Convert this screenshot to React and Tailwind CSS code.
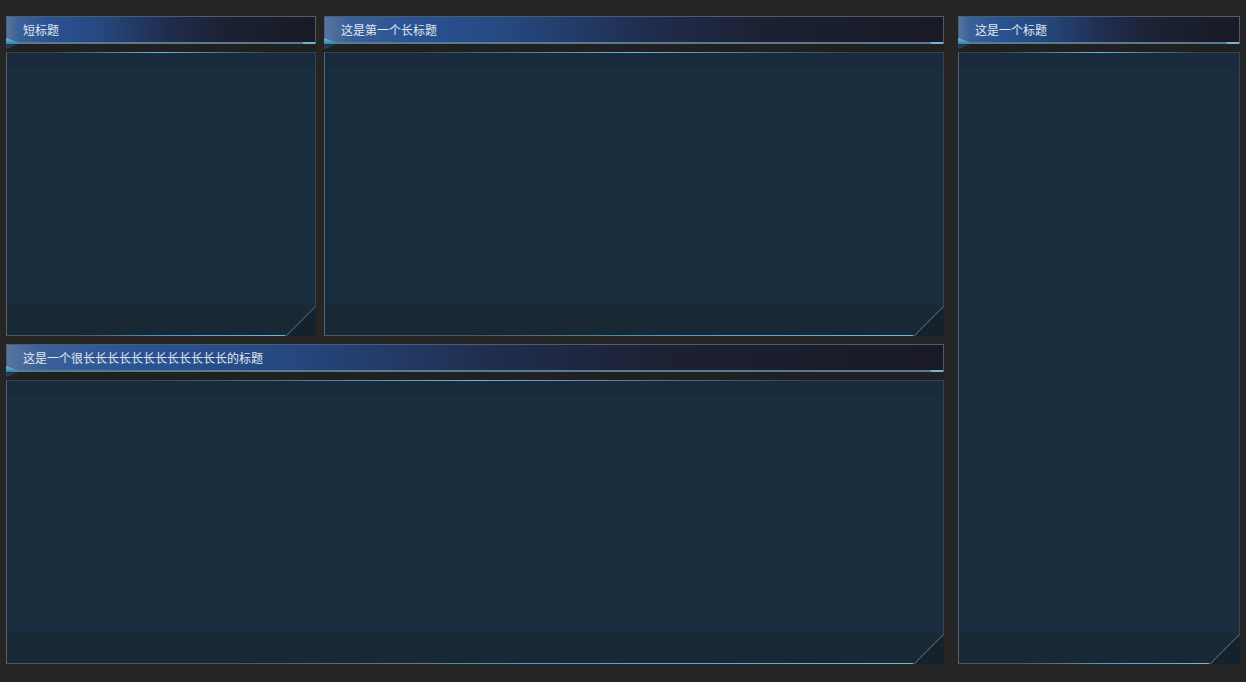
import React from 'react'

// 面板：标题条 + 内容框（右下角斜切）
function Panel({ title, className = '' }) {
  return (
    <div className={`flex flex-col bg-[#1f2022] ${className}`}>
      {/* 标题条 */}
      <div className="relative h-[28px] shrink-0 border border-[#4b5d73] border-b-2 border-b-[#5a7a90] bg-[linear-gradient(90deg,#56759e_0%,#3a6098_4%,#2a5393_14%,#25487f_30%,#202d4e_52%,#1c2031_72%,#191a25_100%)]">
        <span className="absolute left-[16px] top-1/2 -translate-y-1/2 whitespace-nowrap text-[12px] leading-none text-[#e2e9f0] font-['Noto_Sans_CJK_SC',sans-serif]">
          {title}
        </span>
        <span className="absolute right-0 bottom-[-2px] h-[2px] w-[12px] bg-[#74b4cf]" />
        <svg className="absolute left-[-1px] bottom-[-7px]" width="15" height="11" viewBox="0 0 15 11">
          <defs>
            <linearGradient id="tri" x1="0" y1="0" x2="0" y2="1">
              <stop offset="0" stopColor="#6cbcdc" />
              <stop offset="0.5" stopColor="#3a86ae" />
              <stop offset="0.56" stopColor="#1d3142" />
              <stop offset="1" stopColor="#2e4c5e" />
            </linearGradient>
          </defs>
          <polygon points="0,0 15,5.5 0,11" fill="url(#tri)" />
        </svg>
      </div>

      {/* 内容框 */}
      <div className="relative mt-2 flex-1 border border-[#37454f] border-l-[#56626c] border-b-[#435a69] bg-[#1a2d3e]">
        <div className="absolute inset-x-0 top-0 h-[14px] bg-[#182a3b]" />
        <div className="absolute inset-x-0 bottom-0 h-[30px] bg-[#182834]" />
        <div className="absolute left-0 right-0 top-[-1px] h-px bg-[linear-gradient(90deg,transparent_15%,#6cb6d6_50%,transparent_85%)]" />
        <div className="absolute left-0 right-[30px] bottom-[-1px] h-px bg-[linear-gradient(90deg,transparent_25%,#5a9cc4_60%,#78b6d6_100%)]" />
        <svg className="absolute right-[-1px] bottom-[-1px]" width="30" height="30" viewBox="0 0 30 30">
          <polygon points="30,0 30,30 0,30" fill="#16222b" />
          <line x1="0" y1="30" x2="30" y2="0" stroke="#4a5f6e" strokeWidth="1.2" />
        </svg>
      </div>
    </div>
  )
}

export default function App() {
  return (
    <div className="flex h-[682px] w-full bg-[#252525] pt-4 pb-[18px] px-[6px]">
      <div className="flex w-[938px] flex-col gap-2">
        <div className="flex h-[320px] gap-2">
          <Panel title="短标题" className="w-[310px]" />
          <Panel title="这是第一个长标题" className="flex-1" />
        </div>
        <Panel title="这是一个很长长长长长长长长长长长长的标题" className="flex-1" />
      </div>
      <Panel title="这是一个标题" className="ml-[14px] w-[282px]" />
    </div>
  )
}
